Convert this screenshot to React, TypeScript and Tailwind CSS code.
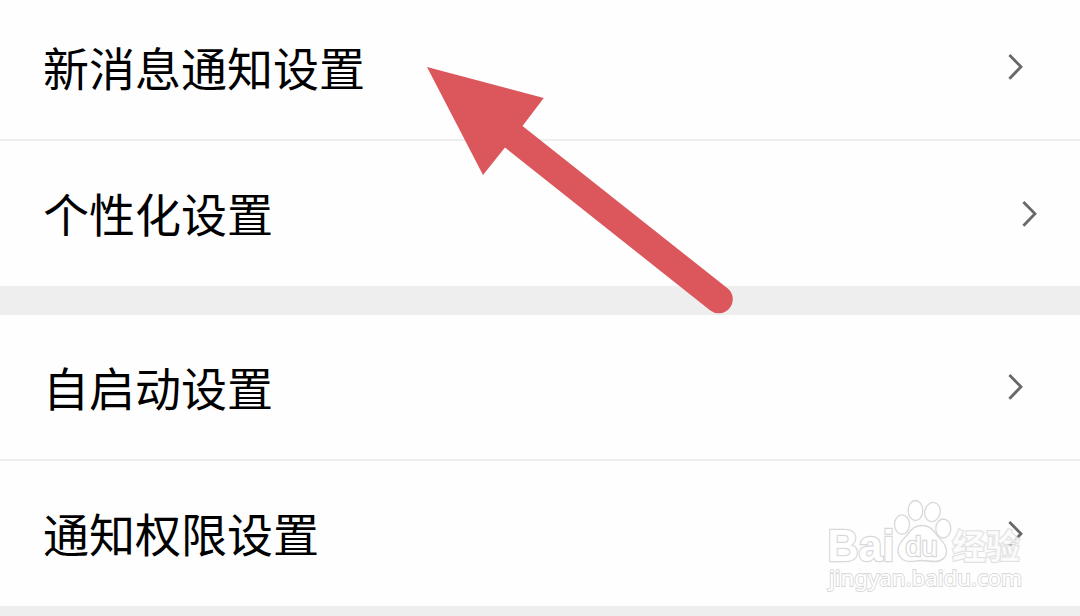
import clsx from 'clsx';

interface SettingRowProps {
  label: string;
  className?: string;
}

function SettingRow({ label, className }: SettingRowProps) {
  return (
    <div className={clsx('flex items-center justify-between pl-[43px] bg-[#fefefe]', className)}>
      <span className="text-[46px] leading-[60px] pb-[3px] text-black whitespace-nowrap">{label}</span>
      <svg width="18" height="30" viewBox="0 0 18 30" fill="none" className="shrink-0">
        <path d="M2.4 2.9L14 14.8L2.4 26.7" stroke="#686868" strokeWidth="2.8" />
      </svg>
    </div>
  );
}

function Arrow() {
  return (
    <svg
      className="absolute left-[420px] top-[60px] pointer-events-none"
      width="320"
      height="260"
      viewBox="420 60 320 260"
    >
      <path
        d="M427 67L543.8 98L522.5 126L727.5 288.3A14 14 0 0 1 710 310.3L505 147.5L483 175Z"
        fill="#db575c"
      />
    </svg>
  );
}

function Watermark() {
  return (
    <svg
      className="absolute left-[820px] top-[490px] pointer-events-none"
      width="220"
      height="110"
      viewBox="820 490 220 110"
      fill="#fff"
      stroke="#d8d8d8"
      strokeWidth="1.3"
      fontFamily="'Liberation Sans', 'Noto Sans CJK SC', sans-serif"
    >
      <text x="827.5" y="560.5" fontSize="44" fontWeight="700" textLength="67" lengthAdjust="spacingAndGlyphs" paintOrder="stroke" strokeWidth="2.4">
        Bai
      </text>
      <ellipse cx="902" cy="524.5" rx="7.5" ry="9.7" />
      <ellipse cx="915.5" cy="510.5" rx="7.3" ry="10" />
      <ellipse cx="932.5" cy="512" rx="7.7" ry="9.7" transform="rotate(12 932.5 512)" />
      <ellipse cx="943.3" cy="528.5" rx="7.5" ry="9.5" />
      <path d="M922 525.5C929 525.5 933 529 936 534C940 540 946.500 543 946.500 551C946.500 558 941 561.500 935 561.500C930 561.500 927 560.500 922 560.500C917 560.500 914 561.500 910 561.500C903 561.500 898 557 898 550C898 543 904 539 908 534C911 529 915 525.500 922 525.500Z" />
      <text x="905.5" y="555.5" fontSize="27" fontWeight="400" textLength="32" lengthAdjust="spacingAndGlyphs" paintOrder="stroke" strokeWidth="2.4">
        du
      </text>
      <text x="952" y="558.5" fontSize="34" fontWeight="700" textLength="68" lengthAdjust="spacingAndGlyphs" paintOrder="stroke" strokeWidth="2.2" strokeOpacity="0.75" fillOpacity="0.75" fontFamily="'Noto Sans CJK SC', sans-serif">
        经验
      </text>
      <text x="829" y="586" fontSize="22" fontWeight="400" textLength="193" lengthAdjust="spacingAndGlyphs" paintOrder="stroke" strokeWidth="1.8" fontFamily="'Noto Sans', sans-serif">
        jingyan.baidu.com
      </text>
    </svg>
  );
}

export default function App() {
  return (
    <div className="relative w-[1080px] h-[616px] overflow-hidden bg-[#eeeeee] font-['Noto_Sans_CJK_SC',sans-serif]">
      <div className="flex flex-col">
        <SettingRow label="新消息通知设置" className="h-[141px] border-b-2 border-[#eeeeee] pr-[55px] pb-[5px]" />
        <SettingRow label="个性化设置" className="h-[145px] pr-[41px]" />
      </div>

      <div className="flex flex-col mt-[29px]">
        <SettingRow label="自启动设置" className="h-[146px] border-b-2 border-[#eeeeee] pr-[55px]" />
        <SettingRow label="通知权限设置" className="h-[145px] pr-[55px]" />
      </div>

      <Watermark />
      <Arrow />
    </div>
  );
}
